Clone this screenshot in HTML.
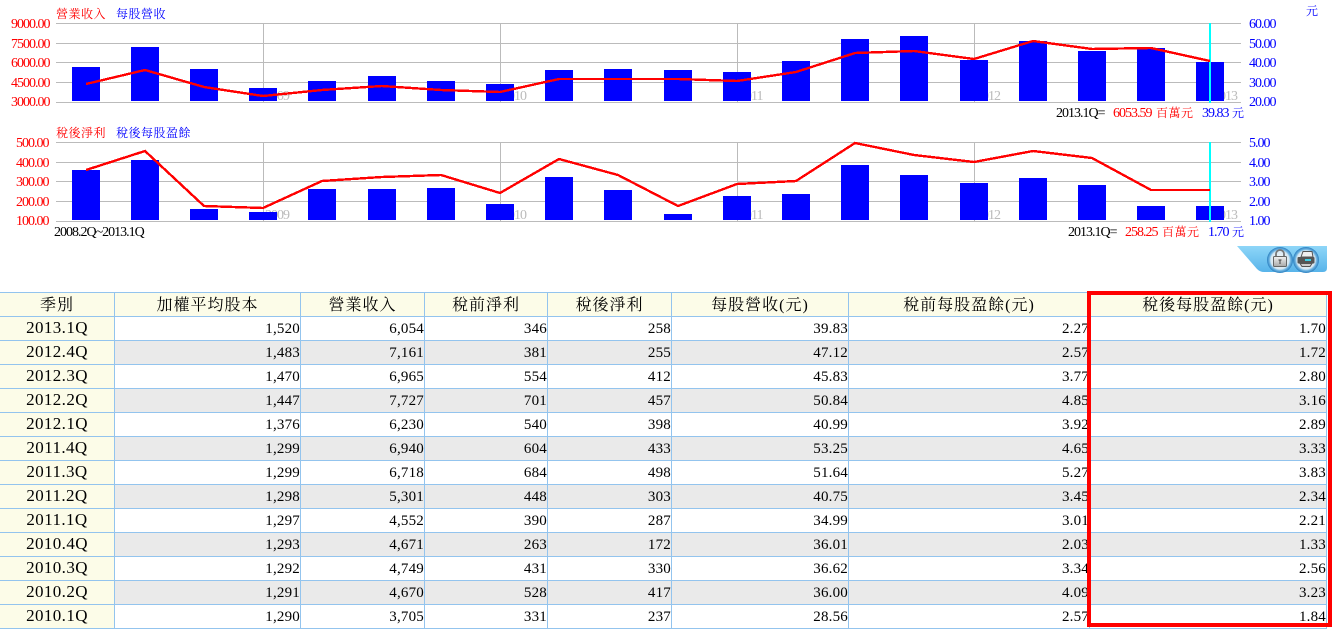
<!DOCTYPE html>
<html><head><meta charset="utf-8"><title>營收盈餘</title>
<style>
html,body{margin:0;padding:0;background:#fff;width:1334px;height:629px;overflow:hidden}
body{position:relative;font-family:"Liberation Serif","Noto Serif CJK SC",serif}
svg{position:absolute;left:0;top:0}
svg text{font-family:"Liberation Serif","Noto Serif CJK SC",serif;font-size:14px;letter-spacing:-1px}
svg text.cj{font-size:12px;letter-spacing:.5px}
table{position:absolute;left:0;top:292px;border-collapse:separate;border-spacing:0;table-layout:fixed;width:1327px}
th,td{box-sizing:border-box;height:24px;padding:0;border-right:1px solid #93c4ee;border-bottom:1px solid #93c4ee;overflow:hidden;white-space:nowrap;color:#000;line-height:20px}
th{background:#fcfce8;border-top:1px solid #93c4ee;height:25px;font-weight:normal;font-size:16px;letter-spacing:1px;text-align:center;vertical-align:top;line-height:20px;padding-top:3px}
td{text-align:right;font-size:15px;letter-spacing:.2px;padding-right:0}
td:first-child{background:#fcfce8;text-align:center;font-size:17px;letter-spacing:.4px;padding:0 0 2px 0}
tr.g td{background:#eaeaea}
tr.g td:first-child{background:#fcfce8}
#box{position:absolute;left:1087px;top:291px;width:237px;height:328px;border:4px solid #f00}
</style></head><body>
<svg width="1334" height="290" viewBox="0 0 1334 290">
<defs>
<linearGradient id="bt" x1="0" y1="0" x2="0" y2="1"><stop offset="0" stop-color="#8ed6f8"/><stop offset="1" stop-color="#58b4ea"/></linearGradient>
<radialGradient id="ci" cx=".5" cy=".5" r=".5"><stop offset="0" stop-color="#f4f8fb"/><stop offset=".7" stop-color="#d8e8f2"/><stop offset=".82" stop-color="#6db4e2"/><stop offset="1" stop-color="#2a7fc0"/></radialGradient>
<linearGradient id="lk" x1="0" y1="0" x2="0" y2="1"><stop offset="0" stop-color="#f2f2f2"/><stop offset="1" stop-color="#a8a8a8"/></linearGradient>
</defs>
<g fill="#bbb" shape-rendering="crispEdges">
<rect x="56" y="23" width="1185" height="1"/><rect x="56" y="43" width="1185" height="1"/><rect x="56" y="62" width="1185" height="1"/><rect x="56" y="82" width="1185" height="1"/><rect x="56" y="102" width="1185" height="1"/>
<rect x="263" y="23" width="1" height="80"/><rect x="500" y="23" width="1" height="80"/><rect x="737" y="23" width="1" height="80"/><rect x="974" y="23" width="1" height="80"/>
<rect x="56" y="142" width="1185" height="1"/><rect x="56" y="162" width="1185" height="1"/><rect x="56" y="181" width="1185" height="1"/><rect x="56" y="201" width="1185" height="1"/><rect x="56" y="221" width="1185" height="1"/>
<rect x="263" y="142" width="1" height="80"/><rect x="500" y="142" width="1" height="80"/><rect x="737" y="142" width="1" height="80"/><rect x="974" y="142" width="1" height="80"/>
</g>
<g fill="#bbb">
<text x="265" y="100">2009</text><text x="502" y="100">2010</text><text x="739" y="100">2011</text><text x="976" y="100">2012</text><text x="1213" y="100">2013</text>
<text x="265" y="219">2009</text><text x="502" y="219">2010</text><text x="739" y="219">2011</text><text x="976" y="219">2012</text><text x="1213" y="219">2013</text>
</g>
<g fill="#00f" shape-rendering="crispEdges">
<rect x="72" y="67" width="28" height="34"/><rect x="131" y="47" width="28" height="54"/><rect x="190" y="69" width="28" height="32"/><rect x="249" y="88" width="28" height="13"/><rect x="308" y="81" width="28" height="20"/><rect x="368" y="76" width="28" height="25"/><rect x="427" y="81" width="28" height="20"/><rect x="486" y="84" width="28" height="17"/><rect x="545" y="70" width="28" height="31"/><rect x="604" y="69" width="28" height="32"/><rect x="664" y="70" width="28" height="31"/><rect x="723" y="72" width="28" height="29"/><rect x="782" y="61" width="28" height="40"/><rect x="841" y="39" width="28" height="62"/><rect x="900" y="36" width="28" height="65"/><rect x="960" y="60" width="28" height="41"/><rect x="1019" y="41" width="28" height="60"/><rect x="1078" y="51" width="28" height="50"/><rect x="1137" y="48" width="28" height="53"/><rect x="1196" y="62" width="28" height="39"/>
<rect x="72" y="170" width="28" height="50"/><rect x="131" y="160" width="28" height="60"/><rect x="190" y="209" width="28" height="11"/><rect x="249" y="212" width="28" height="8"/><rect x="308" y="189" width="28" height="31"/><rect x="368" y="189" width="28" height="31"/><rect x="427" y="188" width="28" height="32"/><rect x="486" y="204" width="28" height="16"/><rect x="545" y="177" width="28" height="43"/><rect x="604" y="190" width="28" height="30"/><rect x="664" y="214" width="28" height="6"/><rect x="723" y="196" width="28" height="24"/><rect x="782" y="194" width="28" height="26"/><rect x="841" y="165" width="28" height="55"/><rect x="900" y="175" width="28" height="45"/><rect x="960" y="183" width="28" height="37"/><rect x="1019" y="178" width="28" height="42"/><rect x="1078" y="185" width="28" height="35"/><rect x="1137" y="206" width="28" height="14"/><rect x="1196" y="206" width="28" height="14"/>
</g>
<g fill="#0ff" shape-rendering="crispEdges"><rect x="1209" y="23" width="2" height="80"/><rect x="1209" y="142" width="2" height="80"/></g>
<g fill="none" stroke="#f00" stroke-width="2.4" shape-rendering="crispEdges">
<polyline points="86,84 145,70 204,87 263,96 322,90 382,86 441,90 500,92 559,79 618,79 678,79 737,81 796,72 855,53 914,51 974,59 1033,41 1092,49 1151,48 1210,61"/>
<polyline points="86,170 145,151 204,206 263,208 322,181 382,177 441,175 500,193 559,159 618,175 678,206 737,184 796,181 855,143 914,155 974,162 1033,151 1092,158 1151,190 1210,190"/>
</g>
<g fill="#f00">
<text x="11" y="28">9000.00</text><text x="11" y="48">7500.00</text><text x="11" y="67">6000.00</text><text x="11" y="87">4500.00</text><text x="11" y="106">3000.00</text>
<text x="16" y="147">500.00</text><text x="16" y="167">400.00</text><text x="16" y="186">300.00</text><text x="16" y="206">200.00</text><text x="16" y="225">100.00</text>
<text class="cj" x="56" y="18">營業收入</text><text class="cj" x="56" y="137">稅後淨利</text>
<text x="1113" y="117">6053.59</text><text class="cj" x="1156" y="117">百萬元</text><text x="1125" y="236">258.25</text><text class="cj" x="1162" y="236">百萬元</text>
</g>
<g fill="#00f">
<text x="1249" y="28">60.00</text><text x="1249" y="48">50.00</text><text x="1249" y="67">40.00</text><text x="1249" y="87">30.00</text><text x="1249" y="106">20.00</text>
<text x="1249" y="147">5.00</text><text x="1249" y="167">4.00</text><text x="1249" y="186">3.00</text><text x="1249" y="206">2.00</text><text x="1249" y="225">1.00</text>
<text class="cj" x="116" y="18">每股營收</text><text class="cj" x="116" y="137">稅後每股盈餘</text>
<text class="cj" x="1306" y="15">元</text>
<text x="1202" y="117">39.83</text><text class="cj" x="1232" y="117">元</text><text x="1208" y="236">1.70</text><text class="cj" x="1232" y="236">元</text>
</g>
<g fill="#000">
<text x="1056" y="117">2013.1Q=</text><text x="1068" y="236">2013.1Q=</text><text x="54" y="236">2008.2Q~2013.1Q</text>
</g>
<path d="M1237 246H1327V268Q1327 272 1323 272H1264Q1260 272 1257 269Z" fill="url(#bt)"/>
<circle cx="1280" cy="260" r="13" fill="url(#ci)"/>
<circle cx="1306" cy="260" r="13" fill="url(#ci)"/>
<path d="M1276 257V254a4 4 0 0 1 8 0V257" fill="none" stroke="#777" stroke-width="1.800"/>
<rect x="1273.500" y="256.500" width="13" height="10" rx="1" fill="url(#lk)" stroke="#666"/>
<path d="M1278.500 260H1281.500M1280 260V264" stroke="#444" fill="none"/>
<path d="M1301 257L1303 251.500H1312L1313 257Z" fill="#eee" stroke="#555"/>
<rect x="1297.500" y="257" width="17" height="6.500" rx="1" fill="#555"/>
<rect x="1305" y="259" width="6" height="2" fill="#3cd0e8"/>
<path d="M1300 263.500H1312L1310 266.500H1302Z" fill="#ccc" stroke="#555"/>
</svg>
<table>
<colgroup><col style="width:115px"><col style="width:186px"><col style="width:124px"><col style="width:123px"><col style="width:124px"><col style="width:177px"><col style="width:241px"><col style="width:237px"></colgroup>
<tr><th>季別</th><th>加權平均股本</th><th>營業收入</th><th>稅前淨利</th><th>稅後淨利</th><th>每股營收(元)</th><th>稅前每股盈餘(元)</th><th>稅後每股盈餘(元)</th></tr>
<tr><td>2013.1Q</td><td>1,520</td><td>6,054</td><td>346</td><td>258</td><td>39.83</td><td>2.27</td><td>1.70</td></tr>
<tr class="g"><td>2012.4Q</td><td>1,483</td><td>7,161</td><td>381</td><td>255</td><td>47.12</td><td>2.57</td><td>1.72</td></tr>
<tr><td>2012.3Q</td><td>1,470</td><td>6,965</td><td>554</td><td>412</td><td>45.83</td><td>3.77</td><td>2.80</td></tr>
<tr class="g"><td>2012.2Q</td><td>1,447</td><td>7,727</td><td>701</td><td>457</td><td>50.84</td><td>4.85</td><td>3.16</td></tr>
<tr><td>2012.1Q</td><td>1,376</td><td>6,230</td><td>540</td><td>398</td><td>40.99</td><td>3.92</td><td>2.89</td></tr>
<tr class="g"><td>2011.4Q</td><td>1,299</td><td>6,940</td><td>604</td><td>433</td><td>53.25</td><td>4.65</td><td>3.33</td></tr>
<tr><td>2011.3Q</td><td>1,299</td><td>6,718</td><td>684</td><td>498</td><td>51.64</td><td>5.27</td><td>3.83</td></tr>
<tr class="g"><td>2011.2Q</td><td>1,298</td><td>5,301</td><td>448</td><td>303</td><td>40.75</td><td>3.45</td><td>2.34</td></tr>
<tr><td>2011.1Q</td><td>1,297</td><td>4,552</td><td>390</td><td>287</td><td>34.99</td><td>3.01</td><td>2.21</td></tr>
<tr class="g"><td>2010.4Q</td><td>1,293</td><td>4,671</td><td>263</td><td>172</td><td>36.01</td><td>2.03</td><td>1.33</td></tr>
<tr><td>2010.3Q</td><td>1,292</td><td>4,749</td><td>431</td><td>330</td><td>36.62</td><td>3.34</td><td>2.56</td></tr>
<tr class="g"><td>2010.2Q</td><td>1,291</td><td>4,670</td><td>528</td><td>417</td><td>36.00</td><td>4.09</td><td>3.23</td></tr>
<tr><td>2010.1Q</td><td>1,290</td><td>3,705</td><td>331</td><td>237</td><td>28.56</td><td>2.57</td><td>1.84</td></tr>
</table>
<div id="box"></div>
</body></html>
